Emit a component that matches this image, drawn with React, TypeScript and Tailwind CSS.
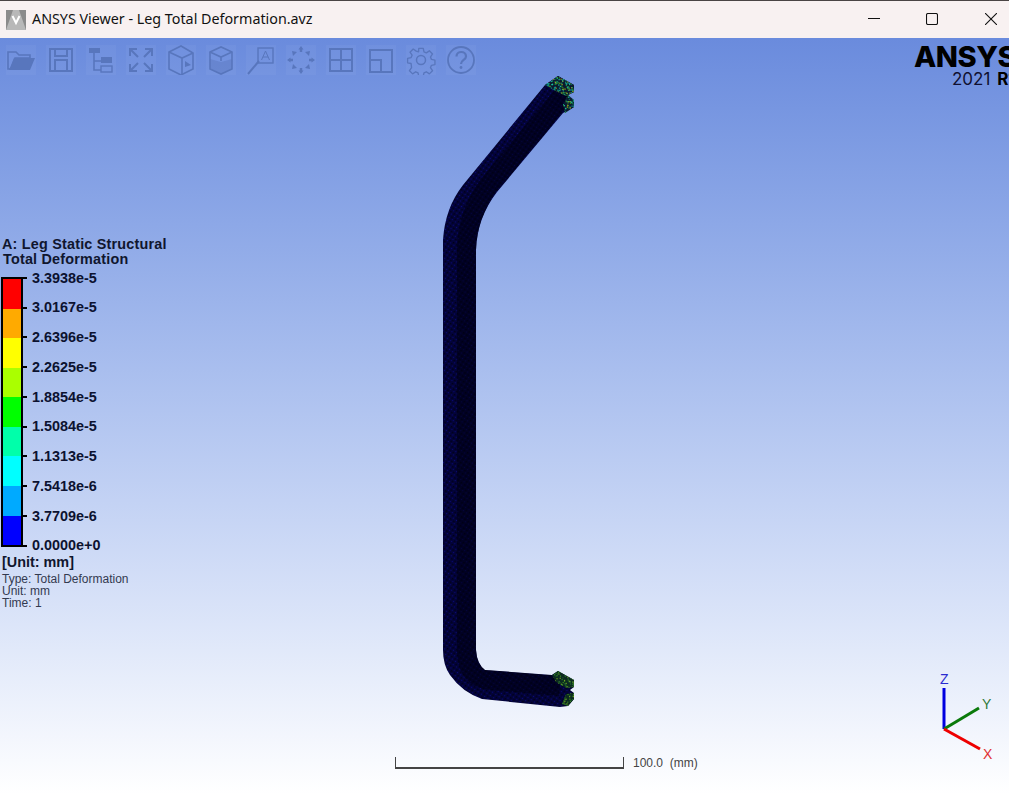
import React from "react";

const legendRows = [
  { label: "3.3938e-5", color: "bg-[#ff0000]" },
  { label: "3.0167e-5", color: "bg-[#ffaa00]" },
  { label: "2.6396e-5", color: "bg-[#ffff00]" },
  { label: "2.2625e-5", color: "bg-[#aaff00]" },
  { label: "1.8854e-5", color: "bg-[#00ff00]" },
  { label: "1.5084e-5", color: "bg-[#00ffaa]" },
  { label: "1.1313e-5", color: "bg-[#00ffff]" },
  { label: "7.5418e-6", color: "bg-[#00aaff]" },
  { label: "3.7709e-6", color: "bg-[#0000ff]" },
];

const ICON = "#5876bd";

const icons: React.ReactNode[] = [
  <g key="open">
    <path d="M2 24V7h8l3 3h11v3H9L5 24z" fill="none" stroke={ICON} strokeWidth="1.6" />
    <path d="M8 13h21l-5 12H3z" fill={ICON} />
  </g>,
  <g key="save" fill="none" stroke={ICON} strokeWidth="2">
    <rect x="4" y="4" width="22" height="22" />
    <path d="M9 4v7h12V4M9 26V15h12v11" />
  </g>,
  <g key="tree">
    <rect x="3" y="3" width="11" height="5" fill={ICON} />
    <path d="M8 8v17h7M8 16h7" fill="none" stroke={ICON} strokeWidth="1.6" />
    <rect x="15" y="12" width="11" height="6" fill={ICON} />
    <rect x="15" y="21" width="11" height="6" fill="none" stroke={ICON} strokeWidth="1.4" />
  </g>,
  <g key="fit" fill="none" stroke={ICON} strokeWidth="2">
    <path d="M12 12 5 5M18 12l7-7M12 18l-7 7M18 18l7 7" />
    <path d="M4 11V4h7M19 4h7v7M4 19v7h7M26 19v7h-7" />
  </g>,
  <g key="cube-right" fill="none" stroke={ICON} strokeWidth="1.6">
    <path d="M3 7 15 1l12 7v16l-12 6-12-6z" />
    <path d="M3 7l13 6 11-5M16 13v17" />
    <path d="M25 20l-6-4v6z" fill={ICON} stroke="none" />
  </g>,
  <g key="cube-top" fill="none" stroke={ICON} strokeWidth="1.6">
    <path d="M4 7l11-5 11 5v17l-11 5-11-5z" />
    <path d="M4 7l11 5 11-5M15 12v4" />
    <path d="M4 14l11 3 11-3v10l-11 5-11-5z" fill={ICON} fillOpacity="0.45" stroke="none" />
  </g>,
  <g key="label" fill="none" stroke={ICON} strokeWidth="1.4">
    <rect x="12" y="3" width="15" height="15" />
    <path d="M2 29 13 16" strokeWidth="2" />
    <path d="M15.500 15 19.500 6l4 9M17 12h5" strokeWidth="1" />
  </g>,
  <g key="rotate" fill={ICON}>
    <path d="M15 1l2.500 3.500h-5zM13.800 4h2.400v3h-2.400zM15 29l-2.500-3.500h5zM13.800 23h2.400v3h-2.400z" />
    <path d="M1 15l3.500-2.500v5zM4 13.800h3v2.400H4zM29 15l-3.500 2.500v-5zM23 13.800h3v2.400h-3z" />
    <path d="M6 6l5 1-4 4zM24 6l-1 5-4-4zM6 24l1-5 4 4zM24 24l-5-1 4-4z" />
  </g>,
  <g key="four" fill="none" stroke={ICON} strokeWidth="2">
    <rect x="4" y="4" width="22" height="22" />
    <path d="M15 4v22M4 15h22" />
  </g>,
  <g key="two" fill="none" stroke={ICON} strokeWidth="2">
    <rect x="4" y="5" width="22" height="22" />
    <path d="M4 15h11v12" />
  </g>,
  <g key="gear" fill="none" stroke={ICON} strokeWidth="1.5">
    <circle cx="15" cy="15" r="4.500" />
    <path d="M12.500 2h5l.8 4 2.600 1.100 3.400-2.300 3.500 3.500-2.300 3.400 1.100 2.600 3.900.8v5l-3.900.8-1.100 2.600 2.300 3.400-3.500 3.500-3.400-2.300-2.600 1.100-.8 3.800h-5l-.8-3.800-2.600-1.100-3.400 2.300-3.500-3.500 2.300-3.400L4 18.900l-3.900-.8v-5l3.900-.8 1.100-2.600-2.300-3.400 3.500-3.500 3.400 2.300L12.300 6z" transform="translate(1.500 1.500) scale(.9)" strokeLinejoin="round" />
  </g>,
  <g key="help" fill="none" stroke={ICON} strokeWidth="1.8">
    <circle cx="15" cy="15" r="13" />
    <path d="M10.500 11.500c0-6 9.500-6 9.500 0 0 3.500-5 3.500-5 7.500" strokeWidth="2.200" />
    <circle cx="15" cy="22.500" r="1.400" fill={ICON} stroke="none" />
  </g>,
];

// outline of the leg in page coordinates
const LEG =
  "M545 85 L558 76 L574 85 L574 92 L568 95 L568 98 L574 100 L574 107 L563 113 L497 192 Q477 218 476 250 L476 650 Q477 664 485 670 L552 675 L558 671 L574 680 L574 687 L570 690 L574 693 L574 699 L568 706 L560 707 L482 699 Q462 692 450 675 Q443 665 443 650 L443 240 Q445 208 463 185 Z";
// darker band down the inner half of the bar
const SHADE = "M566 92 L488 186 Q468 214 467 248 L467 652 Q468 678 490 680 L560 686";
const TOP_TIP = "M545 85 L558 76 L574 85 L574 92 L566 96 L558 92 L550 88Z M568 95 L574 100 L574 107 L565 113 L563 105Z";
const BOTTOM_TIP = "M552 675 L558 671 L574 680 L574 687 L566 688 L556 682Z M566 694 L574 693 L574 699 L568 706 L562 704Z";

const seeded = (n: number, x0: number, y0: number, w: number, h: number, colors: string[]) => {
  const out: { x: number; y: number; c: string }[] = [];
  let s = 17;
  for (let i = 0; i < n; i++) {
    s = (s * 137 + 59) % 2053;
    const x = x0 + ((s % 97) / 97) * w;
    s = (s * 137 + 59) % 2053;
    const y = y0 + ((s % 89) / 89) * h;
    out.push({ x, y, c: colors[i % colors.length] });
  }
  return out;
};

const topDots = seeded(420, 544, 75, 32, 40, ["#1fa070", "#16c0a0", "#3a8a20", "#a8a818", "#0f6a50", "#0c8a90"]);
const bottomDots = seeded(260, 550, 670, 26, 38, ["#3a8a20", "#2b7a30", "#70a020", "#1a5a28"]);

function LegModel() {
  return (
    <svg className="absolute left-[430px] top-[32px]" width="150" height="645" viewBox="430 70 150 645">
      <defs>
        <pattern id="mesh" width="4" height="4" patternUnits="userSpaceOnUse" patternTransform="rotate(35)">
          <rect width="4" height="4" fill="#03033a" />
          <rect x="0" y="0" width="1" height="1" fill="#0a0a78" />
          <rect x="2" y="2" width="1.500" height="1.500" fill="#000016" />
        </pattern>
        <clipPath id="leg-clip">
          <path d={LEG} />
        </clipPath>
        <clipPath id="top-clip">
          <path d={TOP_TIP} />
        </clipPath>
        <clipPath id="bottom-clip">
          <path d={BOTTOM_TIP} />
        </clipPath>
      </defs>
      <path d={LEG} fill="url(#mesh)" />
      <g clipPath="url(#leg-clip)">
        <path d={SHADE} fill="none" stroke="#000010" strokeOpacity="0.55" strokeWidth="20" />
      </g>
      <path d={TOP_TIP} fill="#0a1a30" />
      <path d={BOTTOM_TIP} fill="#0c2a20" />
      <g clipPath="url(#top-clip)">
        {topDots.map((d, i) => (
          <rect key={i} x={d.x} y={d.y} width="1.200" height="1.200" fill={d.c} />
        ))}
      </g>
      <g clipPath="url(#bottom-clip)">
        {bottomDots.map((d, i) => (
          <rect key={i} x={d.x} y={d.y} width="1.200" height="1.200" fill={d.c} />
        ))}
      </g>
    </svg>
  );
}

function Triad() {
  return (
    <svg className="absolute left-[930px] top-[630px]" width="79" height="100" viewBox="930 668 79 100">
      <path d="M944 729V688" stroke="#0000e0" strokeWidth="3" />
      <path d="M944 729 979 708" stroke="#0a7a0a" strokeWidth="3" />
      <path d="M944 729 980 749" stroke="#ee0000" strokeWidth="3" />
      <text x="940" y="684" fontSize="14" fill="#2a2ad0" fontFamily="Liberation Sans">Z</text>
      <text x="982" y="709" fontSize="14" fill="#2f7a3a" fontFamily="Liberation Sans">Y</text>
      <text x="983" y="759" fontSize="14" fill="#e03030" fontFamily="Liberation Sans">X</text>
    </svg>
  );
}

export default function App() {
  return (
    <div className="w-[1009px] h-[794px] overflow-hidden flex flex-col font-['Liberation_Sans',sans-serif]">
      <div className="h-[38px] flex items-center shrink-0 bg-[#f8f1f1] border-t border-[#4a4444] relative">
        <div className="ml-[6px] w-[20px] h-[20px] bg-[#8b8b8b] flex items-center justify-center">
          <svg width="20" height="20" viewBox="0 0 20 20">
            <path d="M0 20 7 0h6l7 20z" fill="#b8b8b8" />
            <path d="M6.500 6 10 13l3.500-7" fill="none" stroke="#fff" strokeWidth="2" />
          </svg>
        </div>
        <span className="ml-[6px] text-[14.3px] text-[#111] font-['Noto_Sans',sans-serif] leading-none">
          ANSYS Viewer - Leg Total Deformation.avz
        </span>
        <div className="ml-auto -mt-[2px] flex items-center">
          <svg className="mr-[46px]" width="12" height="12" viewBox="0 0 12 12">
            <path d="M0 5.500h12" stroke="#111" strokeWidth="1" />
          </svg>
          <svg className="mr-[47px]" width="12" height="12" viewBox="0 0 12 12">
            <rect x=".5" y=".5" width="11" height="11" rx="1.500" fill="none" stroke="#111" strokeWidth="1.100" />
          </svg>
          <svg className="mr-[12px]" width="12" height="12" viewBox="0 0 12 12">
            <path d="M0 0l12 12M12 0 0 12" stroke="#111" strokeWidth="1.100" />
          </svg>
        </div>
      </div>

      <div className="relative flex-1 overflow-hidden bg-gradient-to-b from-[#6a8bdd] to-[#ffffff]">
        <div className="flex gap-[10px] pl-[6px] pt-[7px]">
          {icons.map((icon, i) => (
            <div key={i} className="w-[30px] h-[30px] bg-white/[0.04]">
              <svg width="30" height="30" viewBox="0 0 30 30">
                {icon}
              </svg>
            </div>
          ))}
        </div>

        <div className="absolute left-[914px] right-0 top-[5px] overflow-hidden whitespace-nowrap text-black font-['Inter',sans-serif]">
          <div className="text-[29px] font-extrabold leading-[27px] tracking-[-0.5px]">ANSYS</div>
          <div className="mt-[2px] text-[17px] leading-[15px] pl-[38px] text-[#101030]">
            2021 <span className="pl-[2px] font-bold text-black">R1</span>
          </div>
        </div>

        <div className="absolute left-0 top-[199px] text-[#10162e]">
          <div className="pl-[2px] text-[14.4px] leading-[15px] font-bold tracking-[0.2px]">A: Leg Static Structural</div>
          <div className="pl-[3px] text-[14.4px] leading-[15px] font-bold tracking-[0.2px]">Total Deformation</div>
          <div className="mt-[10px] ml-[1px] flex items-start">
            <div className="w-[22px] h-[270px] shrink-0 border-2 border-black flex flex-col">
              {legendRows.map((row) => (
                <div key={row.label} className={`flex-1 ${row.color}`} />
              ))}
            </div>
            <div className="-mt-[14px]">
              {[...legendRows.map((r) => r.label), "0.0000e+0"].map((label) => (
                <div key={label} className="h-[29.75px] flex items-center">
                  <span className="w-[4px] h-[2px] bg-black mr-[5px]" />
                  <span className="text-[14.4px] leading-none font-bold text-[#0c1230]">{label}</span>
                </div>
              ))}
            </div>
          </div>
          <div className="pl-[2px] -mt-[7px] text-[14.4px] leading-[16px] font-bold">[Unit: mm]</div>
          <div className="pl-[2px] mt-[3px] text-[12px] leading-[12px] text-[#333a50]">
            <div>Type: Total Deformation</div>
            <div>Unit: mm</div>
            <div>Time: 1</div>
          </div>
        </div>

        <LegModel />
        <Triad />

        <div className="absolute left-[395px] top-[716px] flex items-center">
          <div className="w-[229px] h-[12px] border-x border-b-2 border-[#444]" />
          <span className="ml-[9px] text-[12px] text-[#444] whitespace-pre">100.0  (mm)</span>
        </div>
      </div>
    </div>
  );
}
